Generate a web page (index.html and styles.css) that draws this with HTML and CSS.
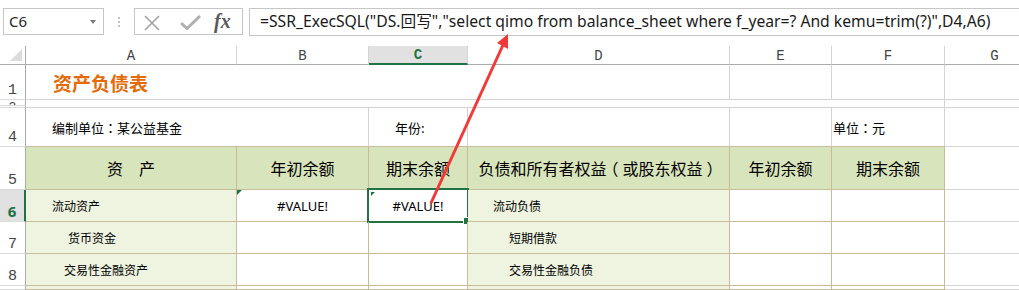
FILE: index.html
```html
<!DOCTYPE html>
<html lang="zh">
<head>
<meta charset="utf-8">
<title>资产负债表</title>
<link rel="stylesheet" href="styles.css">
</head>
<body>
<div class="fbar">
  <div class="namebox"><span class="ref">C6</span><span class="dd"></span></div>
  <div class="grip"><i></i><i></i><i></i></div>
  <div class="btns">
    <svg class="ic-x" width="16" height="16" viewBox="0 0 16 16"><path d="M1 1 L15 15 M15 1 L1 15" stroke="#a3a3a3" stroke-width="1.6" fill="none"/></svg>
    <svg class="ic-ok" width="21" height="15" viewBox="0 0 21 15"><path d="M1 8 L7 13.5 L20 1" stroke="#b0b0b0" stroke-width="3" fill="none"/></svg>
    <span class="fx">fx</span>
  </div>
  <div class="formula">=SSR_ExecSQL("DS.回写","select qimo from balance_sheet where f_year=? And kemu=trim(?)",D4,A6)</div>
</div>

<div class="sheet">
  <!-- column headers -->
  <div class="c corner"><span class="tri"></span></div>
  <div class="c ch">A</div>
  <div class="c ch">B</div>
  <div class="c ch sel">C</div>
  <div class="c ch">D</div>
  <div class="c ch">E</div>
  <div class="c ch">F</div>
  <div class="c ch">G</div>

  <!-- row 1 -->
  <div class="c rh">1</div>
  <div class="c title span4">资产负债表</div>
  <div class="c"></div>
  <div class="c"></div>
  <div class="c"></div>

  <!-- row 2 (row 3 hidden) -->
  <div class="c rh r2">2</div>
  <div class="c span6 rows2"></div>
  <div class="c rows2"></div>
  <div class="c rh r3"></div>

  <!-- row 4 -->
  <div class="c rh">4</div>
  <div class="c txt13 pad26 span2 tb">编制单位<span class="pn">：</span>某公益基金</div>
  <div class="c txt13 pad26 tb">年份:</div>
  <div class="c tb"></div>
  <div class="c tb"></div>
  <div class="c txt13 pad1 tb">单位<span class="pn">：</span>元</div>
  <div class="c"></div>

  <!-- row 5 -->
  <div class="c rh">5</div>
  <div class="c t hd">资　产</div>
  <div class="c t hd">年初余额</div>
  <div class="c t hd">期末余额</div>
  <div class="c t hd">负债和所有者权益<span class="pl">（</span>或股东权益<span class="pr">）</span></div>
  <div class="c t hd">年初余额</div>
  <div class="c t hd">期末余额</div>
  <div class="c"></div>

  <!-- row 6 -->
  <div class="c rh rsel">6</div>
  <div class="c t lg txt12 pad26">流动资产</div>
  <div class="c t val"><span class="err"></span>#VALUE!</div>
  <div class="c t val active"><span class="err"></span>#VALUE!<span class="selbox"><span class="handle"></span></span></div>
  <div class="c t lg txt12 pad25">流动负债</div>
  <div class="c t"></div>
  <div class="c t"></div>
  <div class="c"></div>

  <!-- row 7 -->
  <div class="c rh">7</div>
  <div class="c t lg txt12 pad42">货币资金</div>
  <div class="c t"></div>
  <div class="c t"></div>
  <div class="c t lg txt12 pad41">短期借款</div>
  <div class="c t"></div>
  <div class="c t"></div>
  <div class="c"></div>

  <!-- row 8 -->
  <div class="c rh">8</div>
  <div class="c t lg txt12 pad38">交易性金融资产</div>
  <div class="c t"></div>
  <div class="c t"></div>
  <div class="c t lg txt12 pad41">交易性金融负债</div>
  <div class="c t"></div>
  <div class="c t"></div>
  <div class="c"></div>

  <!-- row 9 (only its top edge is visible) -->
  <div class="c rh"></div>
  <div class="c t lg"></div>
  <div class="c t"></div>
  <div class="c t"></div>
  <div class="c t lg"></div>
  <div class="c t"></div>
  <div class="c t"></div>
  <div class="c"></div>
</div>

<svg class="arrow" width="1019" height="290" viewBox="0 0 1019 290">
  <line x1="431" y1="203" x2="503" y2="45" stroke="#f03a3a" stroke-width="3"/>
  <polygon points="508,34 508,49 497,43" fill="#f03a3a"/>
</svg>
</body>
</html>
```

FILE: styles.css
```css
html, body {
  margin: 0;
  padding: 0;
  background: #ffffff;
}
body {
  width: 1019px;
  height: 290px;
  overflow: hidden;
  position: relative;
  font-family: "Noto Sans CJK SC", "Noto Sans", sans-serif;
  color: #000;
}

/* ---------- formula bar ---------- */
.fbar {
  display: flex;
  align-items: flex-start;
  height: 46px;
  padding: 8px 0 0 3px;
  box-sizing: border-box;
}
.namebox {
  width: 101px;
  height: 27px;
  box-sizing: border-box;
  border: 1px solid #c6c6c6;
  display: flex;
  align-items: center;
  justify-content: space-between;
  padding: 0 7px 0 5px;
}
.ref {
  font-family: "Noto Sans", sans-serif;
  font-size: 15px;
  color: #262626;
  line-height: 1;
}
.dd {
  width: 0;
  height: 0;
  border-left: 3.5px solid transparent;
  border-right: 3.5px solid transparent;
  border-top: 4px solid #7a7a7a;
}
.grip {
  width: 30px;
  height: 27px;
  display: flex;
  flex-direction: column;
  align-items: center;
  justify-content: center;
  gap: 2px;
}
.grip i {
  display: block;
  width: 2px;
  height: 2px;
  background: #c4c4c4;
}
.btns {
  width: 109px;
  height: 27px;
  box-sizing: border-box;
  border: 1px solid #c6c6c6;
  display: flex;
  align-items: center;
  padding: 2px 0 0 9px;
}
.ic-x { margin-right: 20px; }
.ic-ok { margin-right: 13px; }
.fx {
  font-family: "Liberation Serif", serif;
  font-style: italic;
  font-weight: bold;
  font-size: 20px;
  color: #5a5a5a;
  line-height: 1;
  margin-top: -3px;
}
.formula {
  flex: 1;
  height: 28px;
  margin-left: 6px;
  box-sizing: border-box;
  border: 1px solid #c6c6c6;
  border-right: none;
  padding-left: 10px;
  font-family: "Noto Sans", "Noto Sans CJK SC", sans-serif;
  font-size: 15.7px;
  line-height: 25px;
  color: #1a1a1a;
  white-space: nowrap;
  overflow: hidden;
}

/* ---------- sheet ---------- */
.sheet {
  display: grid;
  grid-template-columns: 26px 211px 132px 99px 262px 102px 113px 100px;
  grid-template-rows: 19px 35px 6px 2px 39px 43px 32px 32px 32px 4px;
}
.c {
  box-sizing: border-box;
  border-right: 1px solid #d4d4d4;
  border-bottom: 1px solid #d4d4d4;
  display: flex;
  align-items: center;
  white-space: nowrap;
  overflow: visible;
  position: relative;
}
.span2 { grid-column: span 2; }
.span4 { grid-column: span 4; }
.span6 { grid-column: span 6; }
.rows2 { grid-row: span 2; }

.pn { font-family: "Noto Sans CJK TC", sans-serif; }
.pl { margin-left: -4px; margin-right: 4px; }
.pr { margin-left: 4px; margin-right: -4px; }

.corner {
  border-right: 1px solid #ababab;
  border-bottom: 1px solid #ababab;
}
.corner .tri {
  position: absolute;
  right: 3px;
  bottom: 3px;
  width: 0;
  height: 0;
  border-left: 12px solid transparent;
  border-bottom: 12px solid #dcdcdc;
}
.ch {
  justify-content: center;
  border-bottom: 1px solid #ababab;
  font-family: "Liberation Mono", monospace;
  font-size: 14px;
  color: #444;
  padding-top: 1px;
}
.ch.sel {
  background: #e1e1e1;
  border-bottom: 2px solid #217346;
  color: #217346;
  font-weight: bold;
}
.rh {
  justify-content: center;
  align-items: flex-end;
  border-right: 1px solid #ababab;
  border-bottom: 1px solid #dadada;
  font-family: "Liberation Mono", monospace;
  font-size: 15px;
  line-height: 1;
  color: #444;
  padding-bottom: 1px;
  overflow: hidden;
}
.rh.r2 { align-items: flex-start; padding-top: 1px; font-size: 13px; }
.rh.rsel {
  background: #e1e1e1;
  border-right: 2px solid #217346;
  color: #217346;
  font-weight: bold;
  font-family: "Noto Sans", sans-serif;
  font-size: 15px;
  padding-bottom: 2px;
}

.title {
  color: #e26b0a;
  font-weight: bold;
  font-size: 19px;
  padding-left: 27px;
  padding-top: 1px;
}
.txt13 { font-size: 13px; }
.txt12 { font-size: 12px; }
.pad1 { padding-left: 1px; }
.pad25 { padding-left: 25px; }
.pad26 { padding-left: 26px; }
.pad38 { padding-left: 38px; }
.pad41 { padding-left: 41px; }
.pad42 { padding-left: 42px; }

.tb { border-bottom-color: #c4bd97; }
.t {
  border-right-color: #c4bd97;
  border-bottom-color: #c4bd97;
}
.hd {
  background: #d8e4bc;
  justify-content: center;
  font-size: 16px;
}
.lg { background: #eef4e0; }
.val {
  justify-content: center;
  font-family: "Noto Sans", sans-serif;
  font-size: 13px;
}
.err {
  position: absolute;
  left: 0;
  top: 0;
  width: 0;
  height: 0;
  border-top: 5px solid #217346;
  border-right: 5px solid transparent;
}
.active .err { left: 2px; top: 2px; border-top-width: 4px; border-right-width: 4px; }
.selbox {
  position: absolute;
  left: -2px;
  top: -2px;
  right: -2px;
  bottom: -2px;
  border: 2px solid #217346;
  pointer-events: none;
}
.handle {
  position: absolute;
  right: -4px;
  bottom: -4px;
  width: 6px;
  height: 6px;
  background: #217346;
  border: 1px solid #fff;
}

.arrow {
  position: absolute;
  left: 0;
  top: 0;
  pointer-events: none;
}
```
